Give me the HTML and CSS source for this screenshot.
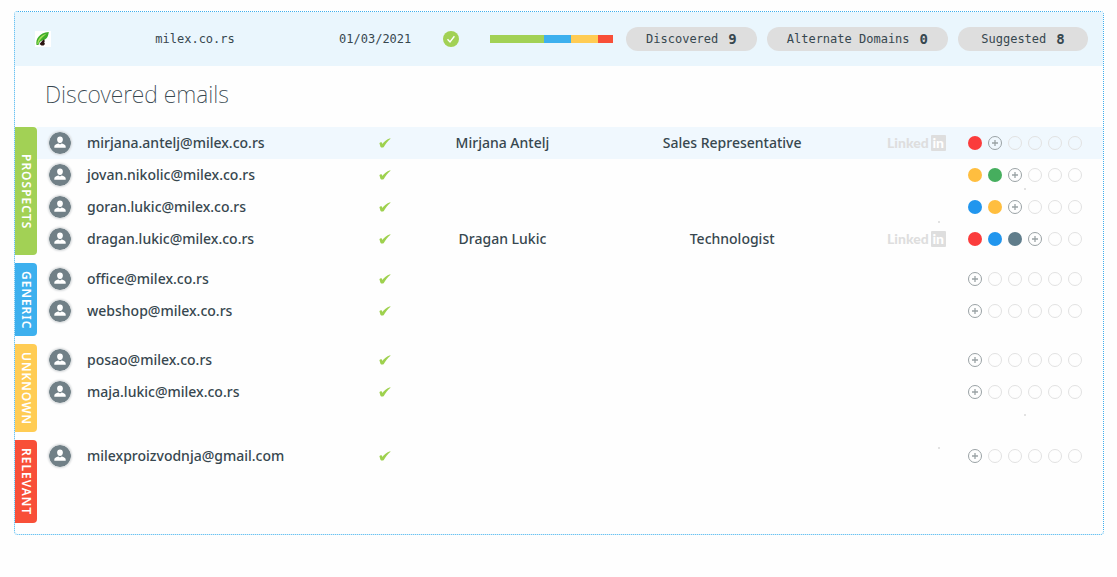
FILE: index.html
```html
<!DOCTYPE html>
<html lang="en">
<head>
    <title>milex.co.rs</title>
    <meta charset="utf-8">
    <meta name="viewport" content="width=device-width, initial-scale=1">
    <link rel="stylesheet" href="styles.css">
</head>
<body>

<!-- shared icons -->
<svg class="defs" aria-hidden="true">
    <symbol id="person" viewBox="0 0 22 22">
        <circle cx="11" cy="11" r="11" fill="#718087"/>
        <path d="M11 4.400c1.800 0 2.900 1.200 2.900 3 0 1.900-1.100 3.500-2.900 3.500s-2.900-1.600-2.900-3.500c0-1.800 1.100-3 2.900-3z" fill="#fff"/>
        <path d="M5.300 15.800v-1.400c0-1.800 2.600-2.700 4.200-3l1.500 1 1.500-1c1.600.3 4.200 1.200 4.200 3v1.400z" fill="#fff"/>
    </symbol>
    <symbol id="check" viewBox="0 0 12 10">
        <path d="M.4 5.200c.5-.9 1.800-1.200 2.400-.6.4.4.5.9.6 1.300C5 3.700 7.600 1.200 11.200.2l.3.500C8.800 3 6.600 5.700 4.800 9c-.7.8-2.700.8-3.200 0C1.200 8 .9 6.400.4 5.200z" fill="#9ed14e"/>
    </symbol>
    <symbol id="plus" viewBox="0 0 14 14">
        <path d="M7 3.500v7M3.500 7h7" stroke="#9aa2a5" stroke-width="1.500" fill="none"/>
    </symbol>
</svg>

<div class="card">
    <div class="header">
        <svg class="logo" viewBox="0 0 16 16">
            <rect width="16" height="16" fill="#fff"/>
            <path d="M1.500 14C.5 8 4 2 13.800 1c-.5 3.500-1.300 6.500-4.600 8C6 9.500 4 11 3.500 14z" fill="#3fae2a"/>
            <path d="M2.300 13C2.600 8 6.500 4 11.800 2.600 8.500 5.500 4.800 8 3.200 13z" fill="#a5e05a"/>
            <path d="M4.500 13c1-1 2-2.500 3-3.500l1.500-1 .8 1.500-.6 1.500.8 1.500-1.500 1.500H6.500z" fill="#2b1512"/>
        </svg>
        <div class="domain">milex.co.rs</div>
        <div class="date">01/03/2021</div>
        <svg class="verified" viewBox="0 0 16 16">
            <circle cx="8" cy="8" r="8" fill="#a2d155"/>
            <path d="M4.500 8.300l2.500 2.700 4.400-5.700" fill="none" stroke="#fff" stroke-width="1.400"/>
        </svg>
        <div class="bar">
            <span class="green"></span>
            <span class="blue"></span>
            <span class="yellow"></span>
            <span class="red"></span>
        </div>
        <div class="button-group">
            <button class="button" type="button">Discovered <b>9</b></button>
            <button class="button" type="button">Alternate Domains <b>0</b></button>
            <button class="button" type="button">Suggested <b>8</b></button>
        </div>
    </div>

    <h1 class="title">Discovered emails</h1>

    <div class="groups">
        <div class="group">
            <div class="label green">PROSPECTS</div>
            <table class="emails">
                <colgroup><col class="c-avatar"><col><col class="c-check"><col class="c-name"><col class="c-job"><col class="c-link"><col class="c-tags"></colgroup>
                <tr class="active">
                    <td><svg class="avatar"><use href="#person"/></svg></td>
                    <td class="text email">mirjana.antelj@milex.co.rs</td>
                    <td><svg class="check"><use href="#check"/></svg></td>
                    <td class="text">Mirjana Antelj</td>
                    <td class="text">Sales Representative</td>
                    <td><a class="linkedin" href="#">Linked<span>in</span></a></td>
                    <td><div class="tags"><i class="tag t-red"></i><button class="tag add" type="button" aria-label="Add tag"><svg><use href="#plus"/></svg></button><i class="tag"></i><i class="tag"></i><i class="tag"></i><i class="tag"></i></div></td>
                </tr>
                <tr>
                    <td><svg class="avatar"><use href="#person"/></svg></td>
                    <td class="text email">jovan.nikolic@milex.co.rs</td>
                    <td><svg class="check"><use href="#check"/></svg></td>
                    <td></td>
                    <td></td>
                    <td></td>
                    <td><div class="tags"><i class="tag t-yellow"></i><i class="tag t-green"></i><button class="tag add" type="button" aria-label="Add tag"><svg><use href="#plus"/></svg></button><i class="tag"></i><i class="tag"></i><i class="tag"></i></div></td>
                </tr>
                <tr>
                    <td><svg class="avatar"><use href="#person"/></svg></td>
                    <td class="text email">goran.lukic@milex.co.rs</td>
                    <td><svg class="check"><use href="#check"/></svg></td>
                    <td></td>
                    <td></td>
                    <td></td>
                    <td><div class="tags"><i class="tag t-blue"></i><i class="tag t-yellow"></i><button class="tag add" type="button" aria-label="Add tag"><svg><use href="#plus"/></svg></button><i class="tag"></i><i class="tag"></i><i class="tag"></i></div></td>
                </tr>
                <tr>
                    <td><svg class="avatar"><use href="#person"/></svg></td>
                    <td class="text email">dragan.lukic@milex.co.rs</td>
                    <td><svg class="check"><use href="#check"/></svg></td>
                    <td class="text">Dragan Lukic</td>
                    <td class="text">Technologist</td>
                    <td><a class="linkedin" href="#">Linked<span>in</span></a></td>
                    <td><div class="tags"><i class="tag t-red"></i><i class="tag t-blue"></i><i class="tag t-grey"></i><button class="tag add" type="button" aria-label="Add tag"><svg><use href="#plus"/></svg></button><i class="tag"></i><i class="tag"></i></div></td>
                </tr>
            </table>
        </div>

        <div class="group">
            <div class="label blue">GENERIC</div>
            <table class="emails">
                <colgroup><col class="c-avatar"><col><col class="c-check"><col class="c-name"><col class="c-job"><col class="c-link"><col class="c-tags"></colgroup>
                <tr>
                    <td><svg class="avatar"><use href="#person"/></svg></td>
                    <td class="text email">office@milex.co.rs</td>
                    <td><svg class="check"><use href="#check"/></svg></td>
                    <td></td>
                    <td></td>
                    <td></td>
                    <td><div class="tags"><button class="tag add" type="button" aria-label="Add tag"><svg><use href="#plus"/></svg></button><i class="tag"></i><i class="tag"></i><i class="tag"></i><i class="tag"></i><i class="tag"></i></div></td>
                </tr>
                <tr>
                    <td><svg class="avatar"><use href="#person"/></svg></td>
                    <td class="text email">webshop@milex.co.rs</td>
                    <td><svg class="check"><use href="#check"/></svg></td>
                    <td></td>
                    <td></td>
                    <td></td>
                    <td><div class="tags"><button class="tag add" type="button" aria-label="Add tag"><svg><use href="#plus"/></svg></button><i class="tag"></i><i class="tag"></i><i class="tag"></i><i class="tag"></i><i class="tag"></i></div></td>
                </tr>
            </table>
        </div>

        <div class="group">
            <div class="label yellow">UNKNOWN</div>
            <table class="emails">
                <colgroup><col class="c-avatar"><col><col class="c-check"><col class="c-name"><col class="c-job"><col class="c-link"><col class="c-tags"></colgroup>
                <tr>
                    <td><svg class="avatar"><use href="#person"/></svg></td>
                    <td class="text email">posao@milex.co.rs</td>
                    <td><svg class="check"><use href="#check"/></svg></td>
                    <td></td>
                    <td></td>
                    <td></td>
                    <td><div class="tags"><button class="tag add" type="button" aria-label="Add tag"><svg><use href="#plus"/></svg></button><i class="tag"></i><i class="tag"></i><i class="tag"></i><i class="tag"></i><i class="tag"></i></div></td>
                </tr>
                <tr>
                    <td><svg class="avatar"><use href="#person"/></svg></td>
                    <td class="text email">maja.lukic@milex.co.rs</td>
                    <td><svg class="check"><use href="#check"/></svg></td>
                    <td></td>
                    <td></td>
                    <td></td>
                    <td><div class="tags"><button class="tag add" type="button" aria-label="Add tag"><svg><use href="#plus"/></svg></button><i class="tag"></i><i class="tag"></i><i class="tag"></i><i class="tag"></i><i class="tag"></i></div></td>
                </tr>
            </table>
        </div>

        <div class="group">
            <div class="label red">RELEVANT</div>
            <table class="emails">
                <colgroup><col class="c-avatar"><col><col class="c-check"><col class="c-name"><col class="c-job"><col class="c-link"><col class="c-tags"></colgroup>
                <tr>
                    <td><svg class="avatar"><use href="#person"/></svg></td>
                    <td class="text email">milexproizvodnja@gmail.com</td>
                    <td><svg class="check"><use href="#check"/></svg></td>
                    <td></td>
                    <td></td>
                    <td></td>
                    <td><div class="tags"><button class="tag add" type="button" aria-label="Add tag"><svg><use href="#plus"/></svg></button><i class="tag"></i><i class="tag"></i><i class="tag"></i><i class="tag"></i><i class="tag"></i></div></td>
                </tr>
            </table>
        </div>
    </div>
</div>

</body>
</html>
```
FILE: styles.css
```css
* {
  box-sizing: border-box;
}
body {
  margin: 0;
  padding: 11px 13px 42px 14px;
  background-color: #fefefe;
  color: #37474f;
  font-family: "Noto Sans", "Open Sans", sans-serif;
  font-size: 14px;
}
.defs {
  display: none;
}
.card {
  border: 1px dotted #3db0ee;
  border-radius: 4px;
  padding-bottom: 11px;
}

/* top bar */
.header {
  display: grid;
  grid-template-columns: 16px 1fr 72px 79px 123px auto;
  align-items: center;
  height: 54px;
  padding: 0 15px 0 20px;
  background-color: #eaf6fd;
  font-family: "DejaVu Sans Mono", monospace;
  font-size: 12px;
}
.logo {
  width: 16px;
  height: 16px;
}
.domain {
  text-align: center;
}
.verified {
  width: 16px;
  height: 16px;
  justify-self: center;
}
.bar {
  display: flex;
  height: 8px;
}
.bar .green {
  flex: 54;
}
.bar .blue,
.bar .yellow {
  flex: 27;
}
.bar .red {
  flex: 15;
}
.green {
  background-color: #a2d155;
}
.blue {
  background-color: #3db0ee;
}
.yellow {
  background-color: #ffcc54;
}
.red {
  background-color: #f84f38;
}
.button-group {
  display: flex;
  gap: 10px;
  margin-left: 13px;
}
.button {
  display: flex;
  align-items: center;
  justify-content: center;
  gap: 10px;
  min-width: 130px;
  height: 24px;
  padding: 0 20px;
  border: 0;
  border-radius: 12px;
  background-color: #dedede;
  color: #37474f;
  font: inherit;
  white-space: nowrap;
}
.button b {
  font-size: 14px;
}

.title {
  margin: 0;
  padding: 12px 30px 17px;
  font-size: 23px;
  font-weight: 200;
  line-height: 32px;
}

/* groups of emails with the coloured side tab */
.groups {
  display: flex;
  flex-direction: column;
  gap: 8px;
  /* faint specks left of the tags */
  background-image: linear-gradient(#e2e2e2, #e2e2e2), linear-gradient(#e2e2e2, #e2e2e2), linear-gradient(#e2e2e2, #e2e2e2), linear-gradient(#e2e2e2, #e2e2e2);
  background-size: 2px 2px;
  background-repeat: no-repeat;
  background-position: right 77px top 61px, right 163px top 94px, right 77px top 287px, right 163px top 320px;
}
.group {
  display: flex;
  align-items: flex-start;
}
.label {
  flex: none;
  align-self: stretch;
  width: 22px;
  padding: 8px 0 7px;
  border-radius: 0 4px 4px 0;
  color: white;
  font-size: 12px;
  font-weight: 600;
  letter-spacing: 1px;
  line-height: 22px;
  text-align: center;
  writing-mode: vertical-rl;
}
.emails {
  width: 100%;
  table-layout: fixed;
  border-collapse: collapse;
}
.c-avatar {
  width: 50px;
}
.c-check {
  width: 30px;
}
.c-name {
  width: 19.3%;
}
.c-job {
  width: 23.8%;
}
.c-link {
  width: 109px;
}
.c-tags {
  width: 135px;
}
.emails td {
  height: 32px;
  padding: 0;
  text-align: center;
  white-space: nowrap;
}
.emails .text {
  padding-bottom: 2px;
  font-weight: 500;
}
.emails .email {
  text-align: left;
}
.active {
  background-color: #f0f8fe;
}
.avatar {
  display: block;
  width: 22px;
  height: 22px;
  margin-left: 12px;
  border-radius: 50%;
  box-shadow: 0 0 2px 1px #d5d8da;
}
.check {
  display: block;
  width: 12px;
  height: 10px;
  margin: 0 auto;
}
.linkedin {
  display: flex;
  align-items: center;
  gap: 2px;
  margin-left: 28px;
  color: #dedede;
  font-family: Lato, sans-serif;
  font-size: 14px;
  font-weight: 900;
  line-height: 16px;
  text-decoration: none;
}
.linkedin span {
  width: 15px;
  border-radius: 1px;
  background-color: #dedede;
  color: white;
  text-align: center;
}
.tags {
  display: flex;
  gap: 6px;
}
.tag {
  width: 14px;
  height: 14px;
  padding: 0;
  border: 1px solid #e2e2e2;
  border-radius: 50%;
  background: none;
}
.add {
  border-color: #9aa2a5;
}
.add svg {
  display: block;
  width: 12px;
  height: 12px;
}
.t-red {
  border: 0;
  background-color: #fb3c3c;
}
.t-yellow {
  border: 0;
  background-color: #ffbe3f;
}
.t-green {
  border: 0;
  background-color: #46ae5e;
}
.t-blue {
  border: 0;
  background-color: #2196ee;
}
.t-grey {
  border: 0;
  background-color: #607d8b;
}
```
